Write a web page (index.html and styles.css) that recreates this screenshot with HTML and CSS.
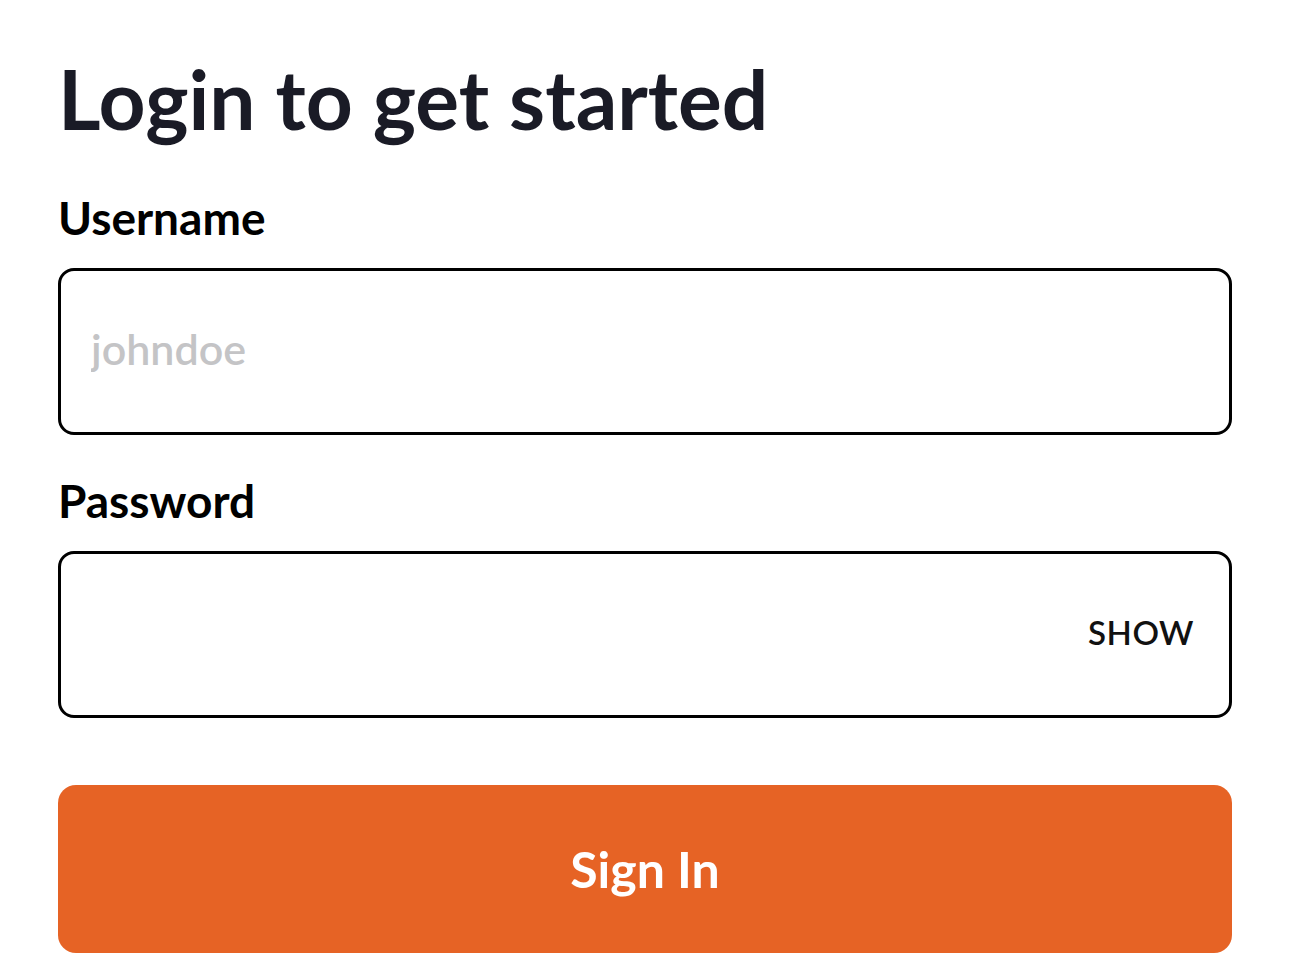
FILE: index.html
```html
<!DOCTYPE html>
<html lang="en">
<head>
<meta charset="utf-8">
<title>Login</title>
<link rel="stylesheet" href="styles.css">
</head>
<body>
<main class="page">
  <h1 class="title">Login to get started</h1>
  <form class="form">
    <div class="field">
      <label class="label" for="username">Username</label>
      <div class="box">
        <input class="input" id="username" type="text" placeholder="johndoe">
      </div>
    </div>
    <div class="field">
      <label class="label" for="password">Password</label>
      <div class="box">
        <input class="input" id="password" type="password">
        <span class="show">SHOW</span>
      </div>
    </div>
    <button class="submit" type="button">Sign In</button>
  </form>
</main>
</body>
</html>
```
FILE: styles.css
```css
* { box-sizing: border-box; }
html, body { margin: 0; padding: 0; background: #fff; }
body { font-family: Lato, "Open Sans", sans-serif; }
.page {
  width: 1290px;
  padding: 50px 58px 0 58px;
}
.title {
  margin: 0;
  font-size: 82px;
  line-height: 96px;
  font-weight: 700;
  color: #1a1b26;
}
.form {
  display: flex;
  flex-direction: column;
  margin-top: 46px;
}
.field {
  display: flex;
  flex-direction: column;
  margin-bottom: 40px;
}
.label {
  font-size: 46px;
  line-height: 52px;
  font-weight: 700;
  color: #000;
  margin-bottom: 24px;
}
.box {
  display: flex;
  align-items: center;
  height: 167px;
  border: 3px solid #000;
  border-radius: 16px;
  padding: 0 35px 0 30px;
}
.input {
  flex: 1;
  border: 0;
  outline: none;
  background: transparent;
  font-family: inherit;
  font-size: 43px;
  font-weight: 600;
  color: #000;
  padding: 0;
  margin-bottom: 6px;
}
.input::placeholder { color: #c4c4c6; }
.show {
  font-size: 33px;
  font-weight: 600;
  color: #111;
  letter-spacing: 0.5px;
  margin-bottom: 6px;
}
.submit {
  height: 168px;
  border: 0;
  border-radius: 18px;
  background: #e66325;
  color: #fff;
  font-family: inherit;
  font-size: 50px;
  font-weight: 700;
  margin-top: 27px;
}
```
